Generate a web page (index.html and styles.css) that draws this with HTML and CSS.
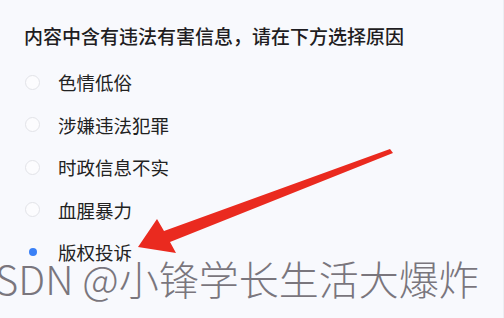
FILE: index.html
```html
<!DOCTYPE html>
<html lang="zh-CN">
<head>
    <meta charset="UTF-8">
    <title>选择原因</title>
    <link rel="stylesheet" href="styles.css">
</head>
<body>
    <div class="panel">
        <h1 class="title">内容中含有违法有害信息，请在下方选择原因</h1>
        <ul class="options">
            <li class="option"><span class="radio"></span>色情低俗</li>
            <li class="option"><span class="radio"></span>涉嫌违法犯罪</li>
            <li class="option"><span class="radio"></span>时政信息不实</li>
            <li class="option"><span class="radio"></span>血腥暴力</li>
            <li class="option checked"><span class="radio"></span>版权投诉</li>
        </ul>

        <!-- red annotation arrow -->
        <svg class="arrow" width="504" height="318" viewBox="0 0 504 318">
            <polygon points="138,247 157,219 164,231 390,149 393,153 170,242 176,253" fill="#ea2a1f"/>
        </svg>

        <div class="watermark">CSDN @小锋学长生活大爆炸</div>
    </div>
</body>
</html>
```

FILE: styles.css
```css
html, body {
    margin: 0;
    padding: 0;
}
body {
    background-color: #f8f9fd;
    font-family: "Noto Sans CJK SC", "Noto Sans", sans-serif;
    color: #222;
    overflow: hidden;
}
.panel {
    position: relative;
    width: 504px;
    height: 318px;
    box-sizing: border-box;
    padding: 22px 0 0 24px;
    border-right: 1px solid #eceef3;
}
.title {
    margin: 0;
    font-size: 19px;
    line-height: 28px;
    font-weight: 500;
    color: #1f1d22;
}
.options {
    list-style: none;
    margin: 11px 0 0 0;
    padding: 0;
}
.option {
    display: flex;
    align-items: center;
    gap: 18px;
    height: 42.5px;
    font-size: 18.5px;
    color: #222;
}
.radio {
    width: 15px;
    height: 15px;
    margin-left: 1px;
    box-sizing: border-box;
    border: 1px solid #e2e3e8;
    border-radius: 50%;
    background-color: #fcfcfe;
    display: flex;
    align-items: center;
    justify-content: center;
}
.option.checked .radio {
    border-color: transparent;
    background-color: transparent;
}
.option.checked .radio::after {
    content: "";
    width: 8px;
    height: 8px;
    border-radius: 50%;
    background-color: #3a80f6;
}
.arrow {
    position: absolute;
    left: 0;
    top: 0;
}
.watermark {
    position: absolute;
    left: -29px;
    top: 255px;
    font-size: 40px;
    line-height: 46px;
    font-weight: 300;
    color: #7a767d;
    white-space: nowrap;
}
```
